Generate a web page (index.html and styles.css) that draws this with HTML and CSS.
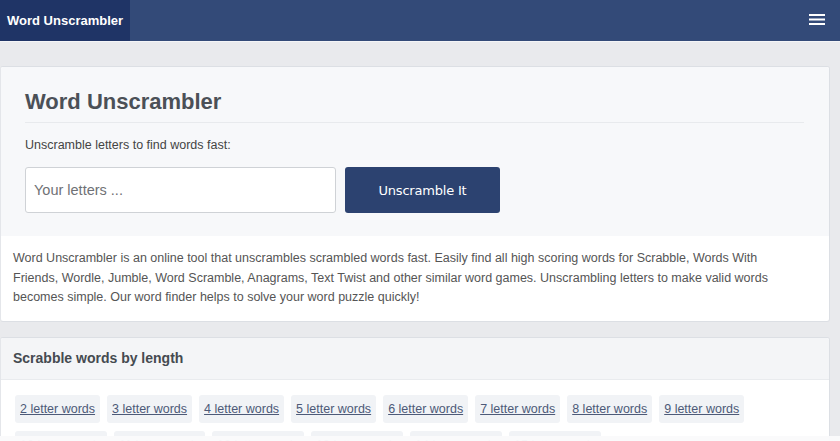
FILE: index.html
```html
<!DOCTYPE html>
<html lang="en">
<head>
<meta charset="utf-8">
<title>Word Unscrambler</title>
<link rel="stylesheet" href="styles.css">
</head>
<body>
<header class="navbar">
  <a class="brand" href="#">Word Unscrambler</a>
  <button class="menu" aria-label="Menu">
    <svg width="16" height="13" viewBox="0 0 16 13"><rect x="0" y="1" width="16" height="2" fill="#fff"/><rect x="0" y="5.5" width="16" height="2" fill="#fff"/><rect x="0" y="10" width="16" height="2" fill="#fff"/></svg>
  </button>
</header>
<main class="main">
  <section class="card">
    <div class="hero">
      <h1 class="title">Word Unscrambler</h1>
      <p class="lead">Unscramble letters to find words fast:</p>
      <form class="search">
        <input class="letters" type="text" placeholder="Your letters ...">
        <button class="go" type="button">Unscramble It</button>
      </form>
    </div>
    <p class="intro">Word Unscrambler is an online tool that unscrambles scrambled words fast. Easily find all high scoring words for Scrabble, Words With Friends, Wordle, Jumble, Word Scramble, Anagrams, Text Twist and other similar word games. Unscrambling letters to make valid words becomes simple. Our word finder helps to solve your word puzzle quickly!</p>
  </section>
  <section class="card">
    <h2 class="card-head">Scrabble words by length</h2>
    <div class="chips">
      <a class="chip" href="#">2 letter words</a>
      <a class="chip" href="#">3 letter words</a>
      <a class="chip" href="#">4 letter words</a>
      <a class="chip" href="#">5 letter words</a>
      <a class="chip" href="#">6 letter words</a>
      <a class="chip" href="#">7 letter words</a>
      <a class="chip" href="#">8 letter words</a>
      <a class="chip" href="#">9 letter words</a>
      <a class="chip" href="#">10 letter words</a>
      <a class="chip" href="#">11 letter words</a>
      <a class="chip" href="#">12 letter words</a>
      <a class="chip" href="#">13 letter words</a>
      <a class="chip" href="#">14 letter words</a>
      <a class="chip" href="#">15 letter words</a>
    </div>
  </section>
</main>
<div class="bottom-bar"></div>
</body>
</html>
```
FILE: styles.css
```css
* { box-sizing: border-box; }
html, body { margin: 0; padding: 0; }
body {
  background: #e9eaed;
  font-family: "Liberation Sans", Arial, sans-serif;
  color: #444;
  overflow: hidden;
}
.navbar {
  height: 42px;
  background: #334a78;
  border-bottom: 1px solid #f4f5f7;
  display: flex;
  align-items: stretch;
  justify-content: space-between;
}
.brand {
  background: #1f3466;
  color: #fff;
  font-weight: bold;
  font-size: 13px;
  text-decoration: none;
  width: 130px;
  padding-left: 7px;
  display: flex;
  align-items: center;
}
.menu {
  background: none;
  border: 0;
  padding: 0 15px 2px 0;
  display: flex;
  align-items: center;
}
.menu svg { display: block; }
.main {
  padding: 24px 10px 0 0;
  display: flex;
  flex-direction: column;
  gap: 15px;
}
.card {
  background: #fff;
  border: 1px solid #dcdfe4;
  border-left-color: #e4e6ea;
  border-radius: 3px;
  overflow: hidden;
}
.hero {
  background: #f7f8fa;
  padding: 22px 25px 23px 24px;
}
.title {
  margin: 0;
  font-size: 22px;
  color: #4b5057;
  font-weight: bold;
  line-height: 26px;
  padding-bottom: 7px;
  border-bottom: 1px solid #e8eaed;
}
.lead {
  margin: 14px 0 0;
  font-size: 12.5px;
  line-height: 16px;
  color: #444;
}
.search {
  margin-top: 14px;
  display: flex;
  gap: 9px;
}
.letters {
  width: 311px;
  height: 46px;
  border: 1px solid #cfd2d6;
  border-radius: 3px;
  background: #fff;
  padding: 0 8px;
  font-family: "Liberation Sans", Arial, sans-serif;
  font-size: 14.5px;
  color: #333;
}
.letters::placeholder { color: #6f7175; }
.go {
  width: 155px;
  height: 46px;
  border: 0;
  border-radius: 3px;
  background: #2c4270;
  color: #fff;
  font-family: "DejaVu Sans", sans-serif;
  font-size: 13px;
  letter-spacing: -0.2px;
}
.intro {
  margin: 0;
  padding: 13px 40px 13px 12px;
  font-size: 12.5px;
  line-height: 19.5px;
  color: #555;
}
.card-head {
  margin: 0;
  background: #f4f5f7;
  border-bottom: 1px solid #e9ebee;
  height: 42px;
  display: flex;
  align-items: center;
  padding-left: 12px;
  font-size: 14px;
  font-weight: bold;
  color: #454a50;
}
.chips {
  padding: 15px 15px 15px 14px;
  display: flex;
  flex-wrap: wrap;
  gap: 8px 7px;
}
.chip {
  background: #f1f3f6;
  border-radius: 3px;
  padding: 0 5px;
  height: 28px;
  display: flex;
  align-items: center;
  color: #4d5a78;
  font-size: 12.5px;
  text-decoration: underline;
  text-underline-offset: 1px;
}
.bottom-bar {
  position: fixed;
  left: 0;
  right: 0;
  bottom: 0;
  height: 5px;
  background: rgba(250, 250, 251, 0.97);
}
```
